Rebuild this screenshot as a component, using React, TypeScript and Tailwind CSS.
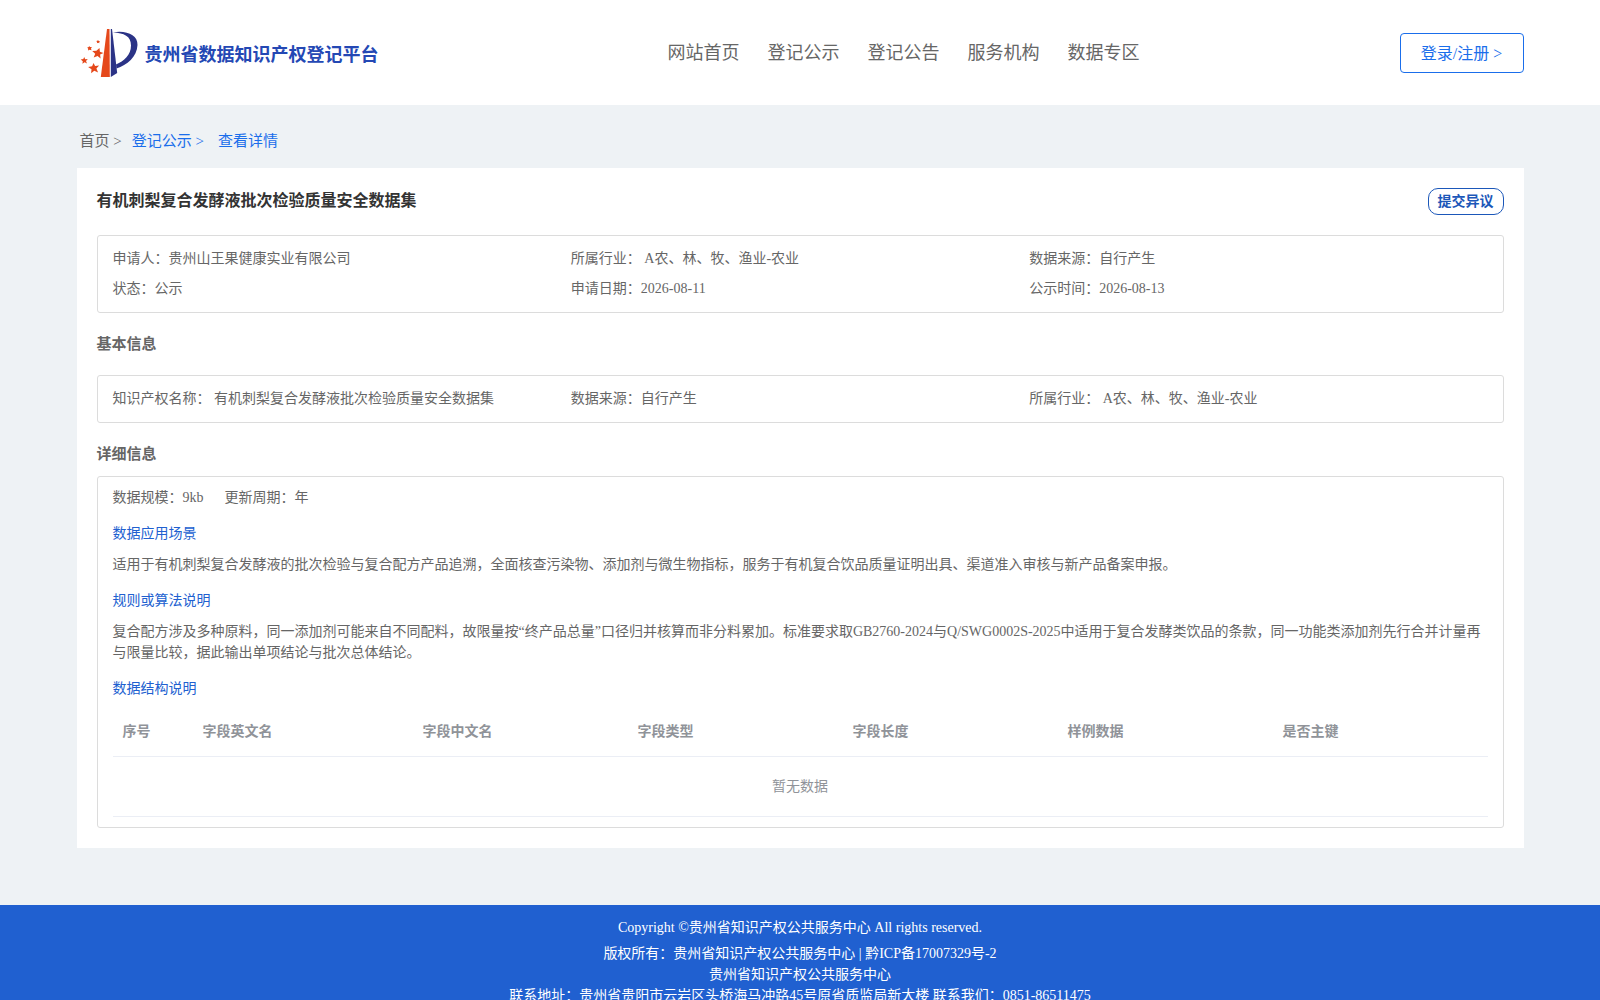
import React from "react";

interface Field {
  label: string;
  value: string;
}

interface Column {
  title: string;
  width: string;
}

const navItems = ["网站首页", "登记公示", "登记公告", "服务机构", "数据专区"];

const summary: Field[] = [
  { label: "申请人：", value: "贵州山王果健康实业有限公司" },
  { label: "所属行业： ", value: "A农、林、牧、渔业-农业" },
  { label: "数据来源：", value: "自行产生" },
  { label: "状态：", value: "公示" },
  { label: "申请日期：", value: "2026-08-11" },
  { label: "公示时间：", value: "2026-08-13" },
];

const basicInfo: Field[] = [
  { label: "知识产权名称： ", value: "有机刺梨复合发酵液批次检验质量安全数据集" },
  { label: "数据来源：", value: "自行产生" },
  { label: "所属行业： ", value: "A农、林、牧、渔业-农业" },
];

const columns: Column[] = [
  { title: "序号", width: "w-[80px]" },
  { title: "字段英文名", width: "w-[220px]" },
  { title: "字段中文名", width: "" },
  { title: "字段类型", width: "" },
  { title: "字段长度", width: "" },
  { title: "样例数据", width: "" },
  { title: "是否主键", width: "" },
];

const Logo: React.FC = () => (
  <svg viewBox="0 0 58 50" className="h-[50px] w-[58px]" aria-hidden="true">
    <path d="M27 1h2.500l.3 48h-9z" fill="#e5481b" />
    <path d="M30.800 1h1.200l5.200 44-6.400 4z" fill="#2b3386" />
    <path
      d="M33 4.500C46 2 58 7 57.500 17C57 29 47 37 36.500 40.500L36 36.500C44 33 51 27 51 17.500C51 8 44 5 33 4.500z"
      fill="#2b3386"
    />
    <g fill="#e5481b">
      <path d="M19.500 20l.4 3.800 3.600 1.100-3.400 1.700.5 4-3-2.600-3.900 1.600 1.500-3.900-3-2.800 4.200-.1z" />
      <path d="M13.500 35l1.600 3 4-.4-2.700 3 1.700 3.800-3.800-1.600-3.200 2.500.4-4-3.400-2.400 4-.7z" />
      <path d="M4.200 29l1 2.200 2.600-.1-1.800 1.900 1 2.500-2.400-1.200-2.200 1.500.4-2.600-2.100-1.600 2.600-.5z" />
      <path d="M9 18l1.100 1 1.800-.1-.9 1.600.5 1.700-1.900-.5-1.600.8.2-1.700-1-1.400 1.600-.3z" />
      <path d="M18 12l.7.9 1.300.1-.8 1 .2 1.300-1.300-.6-1.200.5.2-1.300-.9-1 1.300-.1z" />
    </g>
  </svg>
);

const FieldBox: React.FC<{ fields: Field[] }> = ({ fields }) => (
  <div className="grid grid-cols-3 rounded-[3px] border border-[#dcdcdc] px-[15px] py-2 leading-[30px]">
    {fields.map((field) => (
      <div key={field.label}>
        {field.label}
        {field.value}
      </div>
    ))}
  </div>
);

const DetailSection: React.FC<{ title: string; text: string }> = ({
  title,
  text,
}) => (
  <section>
    <h3 className="mt-[15px] text-[#2060d0]">{title}</h3>
    <p className="mt-[10px]">{text}</p>
  </section>
);

const App: React.FC = () => {
  return (
    <div className="min-h-screen bg-[#eef2f5] font-['Liberation_Serif','Noto_Sans_CJK_SC',serif] text-[14px] leading-[21px] text-[#666666]">
      <header className="bg-white">
        <div className="mx-auto flex h-[105px] max-w-[1447px] items-center justify-between">
          <a href="#" className="flex w-[331px] items-center gap-[7px] pl-[3px]">
            <Logo />
            <span className="pt-[6px] text-[18px] font-bold text-[#2448b4]">
              贵州省数据知识产权登记平台
            </span>
          </a>

          <nav className="flex gap-7 pt-[2px] text-[18px]">
            {navItems.map((item) => (
              <a key={item} href="#">
                {item}
              </a>
            ))}
          </nav>

          <button className="h-10 w-[124px] rounded-[4px] border border-[#1a6eeb] pt-[2px] text-[16px] text-[#1a6eeb]">
            登录/注册 &gt;
          </button>
        </div>
      </header>

      <main className="mx-auto max-w-[1447px] pb-[57px]">
        <div className="flex h-[63px] items-center pt-[10px] pl-[3px] text-[15px]">
          <a href="#">首页 &gt;</a>
          <a href="#" className="ml-[10px] text-[#1a6eeb]">
            登记公示 &gt;
          </a>
          <a href="#" className="ml-[14px] text-[#1a6eeb]">
            查看详情
          </a>
        </div>

        <div className="bg-white p-5">
          <div className="flex h-[47px] items-start justify-between">
            <h1 className="text-[16px] leading-[26px] font-bold text-[#333333]">
              有机刺梨复合发酵液批次检验质量安全数据集
            </h1>
            <button className="h-[27px] w-[76px] rounded-[10px] border border-[#1b57b9] font-bold text-[#1b57b9]">
              提交异议
            </button>
          </div>
          <FieldBox fields={summary} />

          <h2 className="py-5 text-[15px] leading-[22px] font-bold">
            基本信息
          </h2>
          <FieldBox fields={basicInfo} />

          <h2 className="pt-5 pb-[11px] text-[15px] leading-[22px] font-bold">
            详细信息
          </h2>
          <div className="rounded-[3px] border border-[#dcdcdc] px-[15px] py-[10px]">
            <div className="flex gap-[21px]">
              <span>数据规模：9kb</span>
              <span>更新周期：年</span>
            </div>
            <DetailSection
              title="数据应用场景"
              text="适用于有机刺梨复合发酵液的批次检验与复合配方产品追溯，全面核查污染物、添加剂与微生物指标，服务于有机复合饮品质量证明出具、渠道准入审核与新产品备案申报。"
            />
            <DetailSection
              title="规则或算法说明"
              text="复合配方涉及多种原料，同一添加剂可能来自不同配料，故限量按“终产品总量”口径归并核算而非分料累加。标准要求取GB2760-2024与Q/SWG0002S-2025中适用于复合发酵类饮品的条款，同一功能类添加剂先行合并计量再与限量比较，据此输出单项结论与批次总体结论。"
            />
            <h3 className="mt-[15px] text-[#2060d0]">数据结构说明</h3>

            <table className="mt-[9px] w-full table-fixed border-collapse text-[#909399]">
              <thead>
                <tr className="h-12 border-b border-[#ebeef5]">
                  {columns.map((column) => (
                    <th
                      key={column.title}
                      className={`px-[10px] text-left font-bold ${column.width}`}
                    >
                      {column.title}
                    </th>
                  ))}
                </tr>
              </thead>
              <tbody>
                <tr className="h-[60px] border-b border-[#ebeef5]">
                  <td colSpan={columns.length} className="text-center">
                    暂无数据
                  </td>
                </tr>
              </tbody>
            </table>
          </div>
        </div>
      </main>

      <footer className="bg-[#2060d0] pt-3 pb-5 text-center text-white">
        <p className="mb-[5px]">
          Copyright ©贵州省知识产权公共服务中心 All rights reserved.
        </p>
        <p>版权所有：贵州省知识产权公共服务中心 | 黔ICP备17007329号-2</p>
        <p>贵州省知识产权公共服务中心</p>
        <p>
          联系地址：贵州省贵阳市云岩区头桥海马冲路45号原省质监局新大楼
          联系我们：0851-86511475
        </p>
      </footer>
    </div>
  );
};

export default App;
